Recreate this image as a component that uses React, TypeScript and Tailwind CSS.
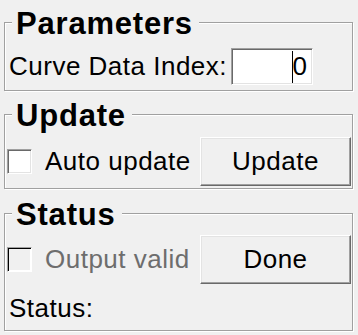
import type { ReactNode } from "react"

function Group({ title, className, children }: { title: string; className: string; children: ReactNode }) {
  return (
    <fieldset
      className={`border border-[#a0a0a0] shadow-[inset_1px_1px_0_#fff,1px_1px_0_#fff] pl-[2px] pr-[1px] ${className}`}
    >
      <legend className="ml-[5px] pl-[4px] pr-[6px] pt-[4px] bg-[#f0f0f0] text-[31px] leading-[34px] font-bold tracking-[0.8px] text-black">
        {title}
      </legend>
      {children}
    </fieldset>
  )
}

function Checkbox({ disabled }: { disabled?: boolean }) {
  return (
    <div
      className={`w-[25px] h-[25px] shrink-0 border border-t-[#a0a0a0] border-l-[#a0a0a0] border-r-white border-b-white ${
        disabled
          ? "bg-[#f0f0f0] shadow-[inset_1px_1px_0_#000,inset_-1px_-1px_0_#fff]"
          : "bg-white shadow-[inset_1px_1px_0_#696969,inset_-1px_-1px_0_#e3e3e3]"
      }`}
    />
  )
}

function Button({ label }: { label: string }) {
  return (
    <button className="ml-auto w-[151px] h-[49px] shrink-0 bg-[#f0f0f0] border border-t-white border-l-white border-r-[#696969] border-b-[#696969] shadow-[inset_-1px_-1px_0_#a0a0a0,inset_1px_1px_0_#e3e3e3] text-[26px] leading-[29px] tracking-[0.5px] text-black">
      {label}
    </button>
  )
}

export default function App() {
  return (
    <div className="w-[358px] h-[335px] overflow-hidden bg-[#f0f0f0] pl-[4px] pr-[5px] flex flex-col font-['Liberation_Sans',Arial,sans-serif] text-[26px] leading-[29px] tracking-[0.5px] text-black">
      <Group title="Parameters" className="mt-[3px] pt-[7px] pb-[5px]">
        <div className="flex items-center">
          <span className="w-[224px] shrink-0 pl-[2px] whitespace-nowrap">Curve Data Index:</span>
          <div className="w-[82px] h-[37px] flex items-center justify-end pr-[5px] bg-white border border-t-[#a0a0a0] border-l-[#a0a0a0] border-r-white border-b-white shadow-[inset_1px_1px_0_#696969,inset_-1px_-1px_0_#e3e3e3] tracking-normal">
            <span className="w-px h-[32px] bg-black" />
            <span>0</span>
          </div>
        </div>
      </Group>

      <Group title="Update" className="mt-[4px] pt-[4px] pb-[2px]">
        <div className="flex items-center">
          <Checkbox />
          <span className="ml-[13px] whitespace-nowrap">Auto update</span>
          <Button label="Update" />
        </div>
      </Group>

      <Group title="Status" className="mt-[5px] pt-[3px] pb-[7px]">
        <div className="flex items-center">
          <Checkbox disabled />
          <span className="ml-[13px] whitespace-nowrap text-[#6d6d6d]">Output valid</span>
          <Button label="Done" />
        </div>
        <div className="mt-[10px] pl-[2px]">Status:</div>
      </Group>
    </div>
  )
}
